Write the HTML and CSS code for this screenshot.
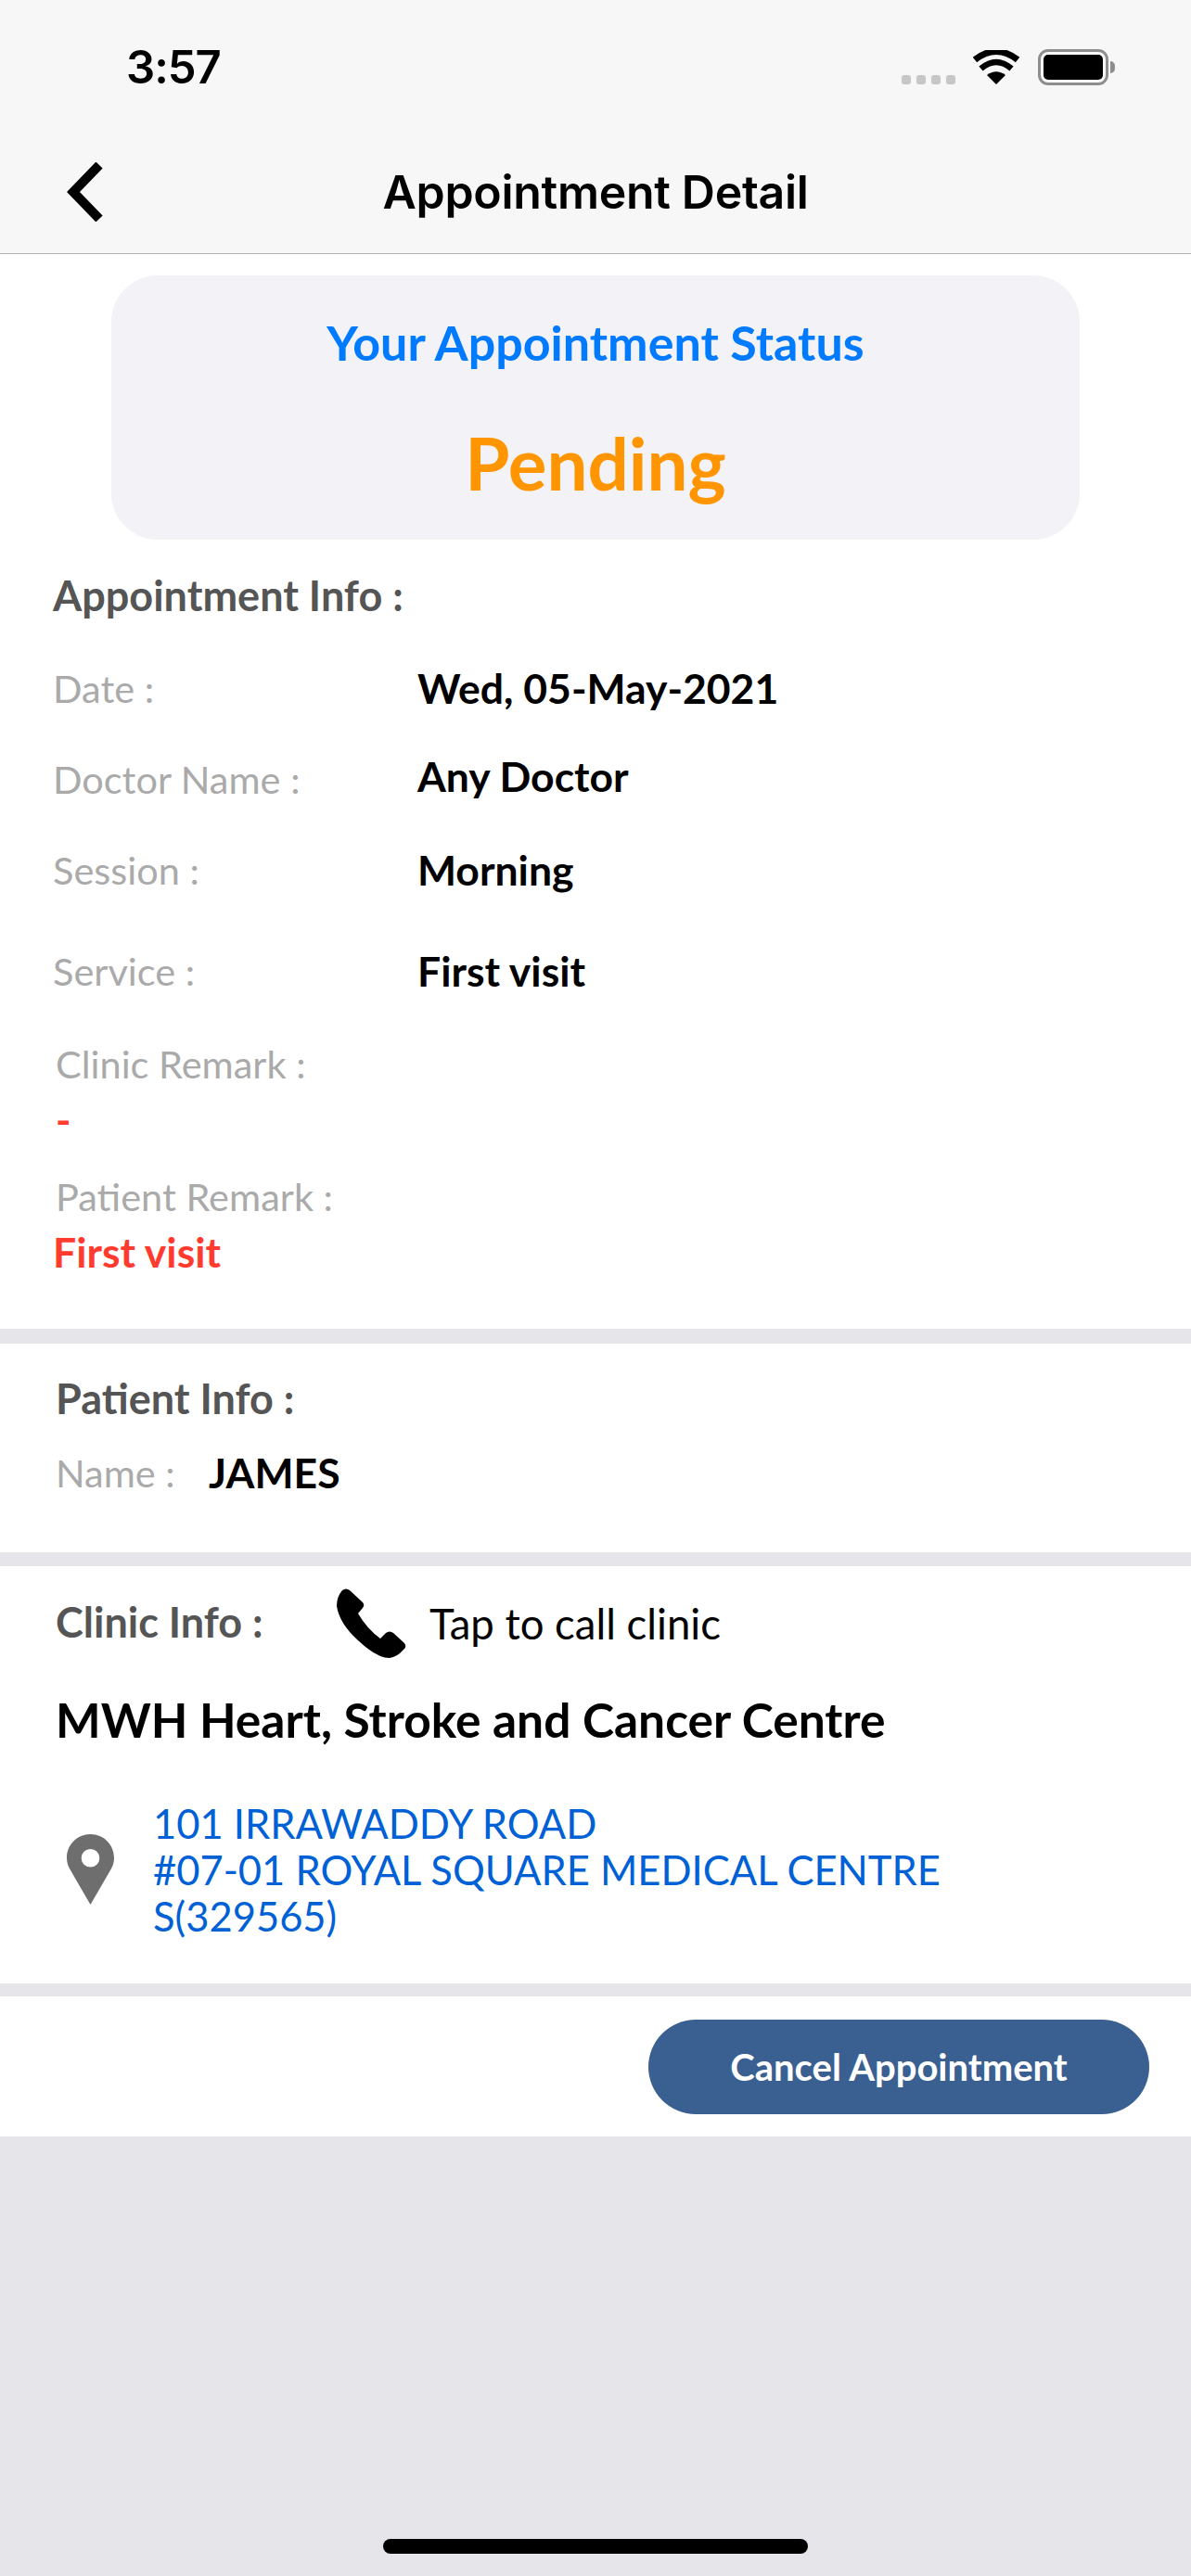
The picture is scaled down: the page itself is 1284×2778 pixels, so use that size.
FILE: index.html
```html
<!DOCTYPE html>
<html lang="en">
<head>
	<meta charset="UTF-8" />
	<meta name="viewport" content="width=device-width, initial-scale=1.0" />
	<title>Appointment Detail</title>

	<link rel="stylesheet" href="styles.css">

</head>
<body>
	<header class="top">
		<div class="status-bar">
			<span class="time">3:57</span>
			<div class="status-icons">
				<div class="signal"><i></i><i></i><i></i><i></i></div>
				<svg class="wifi" viewBox="0 0 50 37">
					<path d="M25 37L15 27Q25 19.500 35 27Z" fill="#000" />
					<path d="M8.500 20Q25 6 41.500 20" fill="none" stroke="#000" stroke-width="6.500" />
					<path d="M2 10.500Q25 -7.500 48 10.500" fill="none" stroke="#000" stroke-width="7" />
				</svg>
				<div class="battery"><div class="battery-fill"></div></div>
				<div class="battery-nub"></div>
			</div>
		</div>
		<nav class="nav">
			<svg class="back" viewBox="0 0 40 64"><path d="M35 3L7 32L35 61" fill="none" stroke="#000" stroke-width="10" /></svg>
			<h1 class="nav-title">Appointment Detail</h1>
		</nav>
	</header>

	<main>
		<section class="panel panel-appointment">
			<div class="status-card">
				<div class="status-label">Your Appointment Status</div>
				<div class="status-value">Pending</div>
			</div>

			<h2 class="heading heading-first">Appointment Info :</h2>

			<div class="row row-date"><span class="label">Date :</span><span class="value">Wed, 05-May-2021</span></div>
			<div class="row row-doctor"><span class="label">Doctor Name :</span><span class="value">Any Doctor</span></div>
			<div class="row"><span class="label">Session :</span><span class="value">Morning</span></div>
			<div class="row row-service"><span class="label">Service :</span><span class="value">First visit</span></div>

			<div class="remark-label">Clinic Remark :</div>
			<div class="remark">-</div>
			<div class="remark-label remark-label-tight">Patient Remark :</div>
			<div class="remark remark-patient">First visit</div>
		</section>

		<section class="panel panel-patient">
			<h2 class="heading">Patient Info :</h2>
			<div class="name-row"><span class="label-inline">Name :</span><span class="value">JAMES</span></div>
		</section>

		<section class="panel panel-clinic">
			<div class="clinic-head">
				<h2 class="heading heading-clinic">Clinic Info :</h2>
				<svg class="phone" viewBox="0 0 76 76"><path d="M7 2Q11 -1 15 2L29 15Q31.500 18 29 21L24 27Q34 44 48 54L54 48Q58 45 62 48L74 59Q77 63 73 66Q66 74 58 75Q44 75 24 56Q4 38 1 19Q1 9 7 2Z" fill="#000" /></svg>
				<span class="call-text">Tap to call clinic</span>
			</div>
			<div class="clinic-name">MWH Heart, Stroke and Cancer Centre</div>
			<div class="address">
				<svg class="pin" viewBox="0 0 51 76"><path fill-rule="evenodd" d="M25.500 0C39.600 0 51 11.400 51 25.500C51 30 49.700 34 47.800 37.500L25.500 76L3.200 37.500C1.300 34 0 30 0 25.500C0 11.400 11.400 0 25.500 0ZM25.500 16A9.800 9.800 0 1 0 25.500 35.600A9.800 9.800 0 1 0 25.500 16Z" fill="#6e6e6e" /></svg>
				<p class="address-text">101 IRRAWADDY ROAD<br />#07-01 ROYAL SQUARE MEDICAL CENTRE<br />S(329565)</p>
			</div>
		</section>

		<section class="panel panel-action">
			<button class="cancel-btn">Cancel Appointment</button>
		</section>
	</main>

	<div class="home-bar"><div class="home-indicator"></div></div>
</body>
</html>
```

FILE: styles.css
```css
html {
	background: #e5e5ea;
}

body {
	margin: 0;
	width: 1284px;
	height: 2778px;
	overflow: hidden;
	position: relative;
	font-family: 'Lato', sans-serif;
}

/* header */
.top {
	height: 273px;
	background: #f7f7f7;
	border-bottom: 1px solid #b2b2b2;
}

.status-bar {
	height: 146px;
	display: flex;
	justify-content: space-between;
	padding: 0 82px 0 136px;
}

.time {
	font-family: 'Inter', sans-serif;
	font-size: 49px;
	font-weight: 600;
	line-height: 146px;
	height: 146px;
	letter-spacing: -1px;
}

.status-icons {
	display: flex;
	padding-top: 53px;
	align-items: flex-start;
}

.signal {
	display: flex;
	gap: 6px;
	margin-top: 28px;
}

.signal i {
	width: 10px;
	height: 10px;
	border-radius: 3px;
	background: #c7c7c7;
}

.wifi {
	width: 50px;
	height: 37px;
	margin: 1px 0 0 19px;
}

.battery {
	width: 76px;
	height: 39px;
	box-sizing: border-box;
	margin-left: 20px;
	border: 3px solid #8e8e8e;
	border-radius: 11px;
	padding: 3px;
}

.battery-fill {
	height: 100%;
	background: #000;
	border-radius: 5px;
}

.battery-nub {
	width: 5px;
	height: 13px;
	margin: 13px 0 0 2px;
	background: #8e8e8e;
	border-radius: 0 5px 5px 0;
}

.nav {
	position: relative;
	height: 127px;
	padding-bottom: 5px;
	box-sizing: border-box;
	display: flex;
	align-items: center;
	justify-content: center;
}

.back {
	position: absolute;
	left: 72px;
	top: 29px;
	width: 40px;
	height: 64px;
}

.nav-title {
	margin: 0;
	font-family: 'Inter', sans-serif;
	font-size: 50px;
	font-weight: 600;
	letter-spacing: -0.3px;
	color: #000;
}

/* panels */
.panel {
	background: #fff;
}

.panel-appointment {
	height: 1159px;
	padding-top: 23px;
	box-sizing: border-box;
}

.panel-patient {
	height: 225px;
	margin-top: 16px;
	padding-top: 29px;
	box-sizing: border-box;
}

.panel-clinic {
	height: 450px;
	margin-top: 15px;
	box-sizing: border-box;
}

.panel-action {
	height: 151px;
	margin-top: 14px;
	box-sizing: border-box;
	padding: 25px 45px 0 0;
	display: flex;
	justify-content: flex-end;
	align-items: flex-start;
}

.status-card {
	width: 1044px;
	height: 285px;
	margin: 0 auto;
	background: #f2f2f7;
	border-radius: 50px;
	text-align: center;
}

.status-label {
	padding-top: 42px;
	font-size: 52px;
	line-height: 60px;
	font-weight: 700;
	color: #007aff;
}

.status-value {
	margin-top: 55px;
	font-size: 78px;
	line-height: 90px;
	font-weight: 700;
	color: #ff9500;
}

.heading {
	margin: 0 0 0 60px;
	font-size: 45px;
	line-height: 60px;
	font-weight: 700;
	color: #555;
}

.heading-first {
	margin: 30px 0 0 57px;
}

.row {
	display: flex;
	height: 60px;
	margin-top: 38px;
	margin-left: 57px;
	line-height: 60px;
}

.row-date {
	margin-top: 40px;
}

.row-service {
	margin-top: 49px;
}

.row-doctor .value {
	margin-top: -3px;
}

.label {
	width: 393px;
	font-size: 41.500px;
	color: #aaa;
}

.value {
	font-size: 44.500px;
	font-weight: 700;
	color: #000;
}

.remark-label {
	margin: 40px 0 0 60px;
	font-size: 41.500px;
	line-height: 60px;
	color: #aaa;
}

.remark-label-tight {
	margin-top: 23px;
}

.remark {
	margin-left: 60px;
	font-size: 44.500px;
	line-height: 60px;
	font-weight: 700;
	color: #ff3b30;
}

.remark-patient {
	margin-left: 57px;
}

.name-row {
	display: flex;
	margin: 20px 0 0 60px;
	line-height: 60px;
}

.label-inline {
	width: 165px;
	font-size: 41.500px;
	color: #aaa;
}

.clinic-head {
	display: flex;
	align-items: flex-start;
	height: 100px;
	padding: 24px 0 0 60px;
}

.heading-clinic {
	margin: 6px 0 0;
	width: 302px;
}

.phone {
	width: 76px;
	height: 76px;
}

.call-text {
	margin: 8px 0 0 25px;
	font-size: 45.500px;
	line-height: 60px;
	color: #000;
}

.clinic-name {
	margin: 11px 0 0 60px;
	font-size: 51.500px;
	line-height: 60px;
	font-weight: 700;
	color: #000;
}

.address {
	display: flex;
	align-items: center;
	margin: 57px 0 0 72px;
}

.pin {
	width: 51px;
	height: 76px;
}

.address-text {
	margin: 0 0 0 42px;
	font-size: 43.500px;
	line-height: 50px;
	color: #0061d6;
}

.cancel-btn {
	width: 540px;
	height: 102px;
	border: 0;
	border-radius: 51px;
	background: #3a6091;
	color: #fff;
	font-family: inherit;
	font-size: 40px;
	font-weight: 700;
}

.home-bar {
	position: absolute;
	left: 0;
	right: 0;
	top: 2738px;
	display: flex;
	justify-content: center;
}

.home-indicator {
	width: 458px;
	height: 16px;
	background: #000;
	border-radius: 8px;
}
```
